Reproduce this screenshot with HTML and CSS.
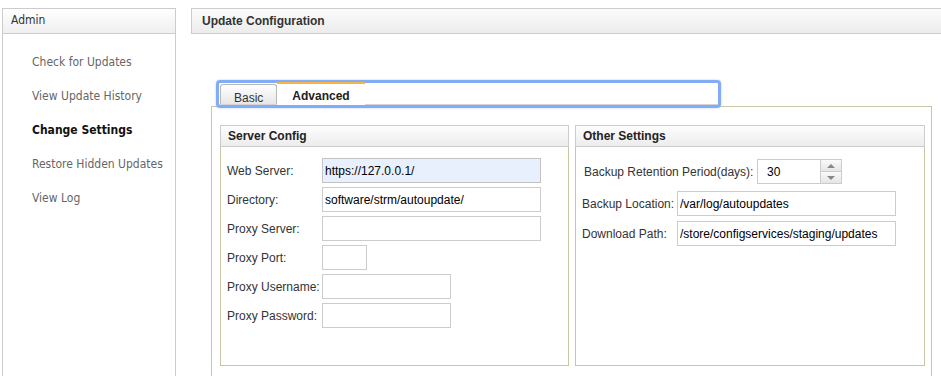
FILE: index.html
```html
<!DOCTYPE html>
<html lang="en">
<head>
<meta charset="UTF-8">
<meta name="viewport" content="width=device-width, initial-scale=1.0">
<title>Update Configuration</title>
<link rel="stylesheet" href="styles.css">
</head>
<body>
<div class="page">
    <aside class="sidebar">
        <div class="sidebar-head">Admin</div>
        <ul class="nav">
            <li>Check for Updates</li>
            <li>View Update History</li>
            <li class="current">Change Settings</li>
            <li>Restore Hidden Updates</li>
            <li>View Log</li>
        </ul>
    </aside>
    <main class="main">
        <div class="main-head">Update Configuration</div>
        <div class="tabs">
            <div class="tab-bar">
                <div class="tab-strip">
                    <span class="tab">Basic</span>
                    <span class="tab active">Advanced</span>
                </div>
            </div>
            <div class="tab-body">
                <section class="box server">
                    <div class="box-head">Server Config</div>
                    <div class="server-form">
                        <label for="webServer">Web Server:</label>
                        <input type="text" id="webServer" class="wide filled" value="https://127.0.0.1/">
                        <label for="directory">Directory:</label>
                        <input type="text" id="directory" class="wide" value="software/strm/autoupdate/">
                        <label for="proxyServer">Proxy Server:</label>
                        <input type="text" id="proxyServer" class="wide">
                        <label for="proxyPort">Proxy Port:</label>
                        <input type="text" id="proxyPort" class="tiny">
                        <label for="proxyUser">Proxy Username:</label>
                        <input type="text" id="proxyUser" class="mid">
                        <label for="proxyPass">Proxy Password:</label>
                        <input type="password" id="proxyPass" class="mid">
                    </div>
                </section>
                <section class="box other">
                    <div class="box-head">Other Settings</div>
                    <div class="retention">
                        <label for="retention">Backup Retention Period(days):</label>
                        <div class="spinner">
                            <input type="text" id="retention" value="30">
                            <div class="spin-buttons">
                                <span class="spin-up"></span>
                                <span class="spin-down"></span>
                            </div>
                        </div>
                    </div>
                    <div class="other-form">
                        <label for="backupLocation">Backup Location:</label>
                        <input type="text" id="backupLocation" value="/var/log/autoupdates">
                        <label for="downloadPath">Download Path:</label>
                        <input type="text" id="downloadPath" value="/store/configservices/staging/updates">
                    </div>
                </section>
            </div>
        </div>
    </main>
</div>
</body>
</html>
```

FILE: styles.css
```css
body {
    margin: 0;
    overflow: hidden;
    font-family: "Liberation Sans", Arial, sans-serif;
    font-size: 12px;
    color: #333;
    background-color: #fff;
}

.page {
    display: flex;
    align-items: flex-start;
    height: 376px;
}

.sidebar {
    width: 174px;
    height: 368px;
    margin: 8px 0 0 2px;
    box-sizing: border-box;
    border: 1px solid #cccccc;
    border-bottom: none;
    font-family: "DejaVu Sans Condensed", "DejaVu Sans", sans-serif;
    font-stretch: condensed;
}

.sidebar-head {
    height: 24px;
    line-height: 23px;
    padding-left: 8px;
    color: #333;
    background: linear-gradient(#ffffff, #efefef);
    border-bottom: 1px solid #cccccc;
}

.nav {
    list-style: none;
    margin: 0;
    padding: 11px 0 0 29px;
}

.nav li {
    height: 34px;
    line-height: 34px;
    color: #666;
}

.nav li.current {
    font-weight: bold;
    color: #111;
}

.main {
    flex: 1;
    margin: 8px 0 0 15px;
}

.main-head {
    height: 26px;
    box-sizing: border-box;
    line-height: 25px;
    padding-left: 10px;
    font-weight: bold;
    color: #333;
    background: linear-gradient(#fbfbfb, #ececec);
    border: 1px solid #cccccc;
    border-right: none;
}

.tabs {
    margin: 46px 0 0 20px;
}

.tab-bar {
    position: relative;
    z-index: 1;
    width: 505px;
    height: 28px;
    box-sizing: border-box;
    margin: 0 0 -2px 5px;
    border: 3px solid #82acf6;
    border-radius: 4px;
    box-shadow: 0 0 2px #a9c6fa;
}

.tab-strip {
    display: flex;
    align-items: flex-end;
    height: 22px;
    box-sizing: border-box;
    padding-left: 1px;
    border-bottom: 1px solid #d4d4d4;
}

.tab {
    box-sizing: border-box;
    line-height: 14px;
}

.tab:not(.active) {
    height: 20px;
    padding: 6px 13px 0;
    color: #333;
    background: linear-gradient(#ffffff, #e6e6e6);
    border: 1px solid #b8b8b8;
    border-bottom: none;
    border-radius: 3px 3px 0 0;
}

.tab.active {
    height: 23px;
    margin-bottom: -1px;
    padding: 5px 15px 0;
    font-weight: bold;
    color: #222;
    background-color: #fff;
    border-top: 2px solid #f5b540;
}

.tab-body {
    display: flex;
    gap: 6px;
    height: 251px;
    margin-right: 9px;
    padding: 18px 6px 0 8px;
    border: 1px solid #c9c6a5;
    border-bottom: none;
}

.box {
    height: 241px;
    box-sizing: border-box;
    border: 1px solid #c9c6a5;
}

.server {
    width: 349px;
}

.other {
    flex: 1;
}

.box-head {
    height: 22px;
    box-sizing: border-box;
    margin: -1px -1px 0;
    line-height: 20px;
    padding-left: 7px;
    font-weight: bold;
    color: #222;
    background: linear-gradient(#fdfdfd, #ececec);
    border: 1px solid #cccccc;
}

input {
    height: 25px;
    box-sizing: border-box;
    margin: 0;
    padding: 0 2px;
    font-family: "Liberation Sans", Arial, sans-serif;
    font-size: 12px;
    color: #000;
    background-color: #fff;
    border: 1px solid #cccccc;
    outline: none;
}

label {
    color: #333;
}

.server-form {
    display: grid;
    grid-template-columns: 95px auto;
    align-items: center;
    justify-items: start;
    row-gap: 4px;
    padding: 11px 0 0 6px;
}

.server-form .wide {
    width: 219px;
}

.server-form .filled {
    background-color: #e8f0fe;
    border-color: #c3c3c3;
}

.server-form .tiny {
    width: 45px;
}

.server-form .mid {
    width: 129px;
}

.retention {
    display: flex;
    align-items: center;
    padding: 12px 0 0 8px;
    margin-bottom: 7px;
}

.retention label {
    width: 173px;
}

.spinner {
    display: flex;
    width: 85px;
    height: 25px;
    box-sizing: border-box;
    border: 1px solid #cccccc;
}

.spinner input {
    flex: 1;
    width: 0;
    height: 23px;
    padding-left: 9px;
    border: none;
}

.spin-buttons {
    display: flex;
    flex-direction: column;
    width: 20px;
    border-left: 1px solid #cccccc;
}

.spin-up,
.spin-down {
    flex: 1;
    display: flex;
    align-items: center;
    justify-content: center;
    background: linear-gradient(#fafafa, #e5e5e5);
}

.spin-up {
    border-bottom: 1px solid #cccccc;
}

.spin-up::before,
.spin-down::before {
    content: "";
    border-left: 4px solid transparent;
    border-right: 4px solid transparent;
}

.spin-up::before {
    border-bottom: 4px solid #888;
}

.spin-down::before {
    border-top: 4px solid #888;
}

.other-form {
    display: grid;
    grid-template-columns: 95px auto;
    align-items: center;
    justify-items: start;
    row-gap: 5px;
    padding-left: 6px;
}

.other-form input {
    width: 219px;
}
```
